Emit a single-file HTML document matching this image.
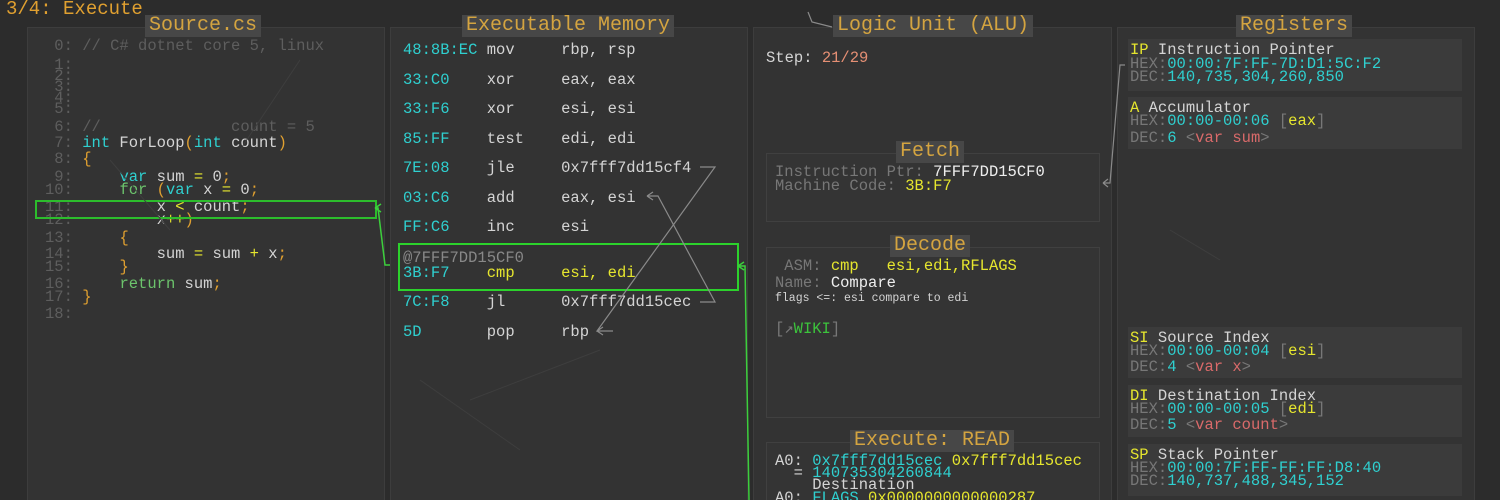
<!DOCTYPE html><html style="overflow:hidden;height:500px"><head><style>
body{margin:0;width:1500px;height:500px;background:#2c2c2c;overflow:hidden;position:relative;font-family:"Liberation Mono","DejaVu Sans Mono",monospace;font-size:15.5px;color:#d4d4d4}
.a{position:absolute;white-space:pre;line-height:1}
.p{position:absolute;background:#333;border:1px solid #3d3d3d}
.b{position:absolute;border:1px solid #404040;background:#343434}
.tt{position:absolute;background:#474747;color:#d4a440;font-size:20px;line-height:22px;padding:0 4px;white-space:pre}
.r{position:absolute;background:#3b3b3b;left:1128px;width:334px}
.c{color:#2fd0d0}.y{color:#e6e62e}.o{color:#e0a030}.d{color:#777}.g{color:#888}.k{color:#5e5e5e}.m{color:#d96a6a}.w{color:#eee}.gr{color:#6cc46c}
</style></head><body>
<div class="a o" style="left:6px;top:0px;font-size:19px">3/4: Execute</div>
<div class="p" style="left:27px;top:27px;width:356px;height:473px"></div>
<div class="p" style="left:390px;top:27px;width:356px;height:473px"></div>
<div class="p" style="left:753px;top:27px;width:357px;height:473px"></div>
<div class="p" style="left:1117px;top:27px;width:356px;height:473px"></div>
<div class="tt" style="left:145px;top:15px">Source.cs</div>
<div class="tt" style="left:462px;top:15px">Executable Memory</div>
<div class="tt" style="left:833px;top:15px">Logic Unit (ALU)</div>
<div class="tt" style="left:1236px;top:15px">Registers</div>

<!-- source -->
<div class="a k" style="left:45px;top:39px"> 0: // C# dotnet core 5, linux</div>
<div class="a k" style="left:45px;top:58px"> 1:</div>
<div class="a k" style="left:45px;top:69px"> 2:</div>
<div class="a k" style="left:45px;top:80px"> 3:</div>
<div class="a k" style="left:45px;top:91px"> 4:</div>
<div class="a k" style="left:45px;top:102px"> 5:</div>
<div class="a k" style="left:45px;top:120px"> 6: //              count = 5</div>
<div class="a" style="left:45px;top:136px"><span class="k"> 7: </span><span class="c">int</span> ForLoop<span class="o">(</span><span class="c">int</span> count<span class="o">)</span></div>
<div class="a" style="left:45px;top:152px"><span class="k"> 8: </span><span class="o">{</span></div>
<div class="a" style="left:45px;top:170px"><span class="k"> 9: </span>    <span class="c">var</span> sum <span class="y">=</span> 0<span class="o">;</span></div>
<div class="a" style="left:45px;top:183px"><span class="k">10: </span>    <span class="gr">for</span> <span class="o">(</span><span class="c">var</span> x <span class="y">=</span> 0<span class="o">;</span></div>
<div class="a" style="left:45px;top:200px"><span class="k">11: </span>        x <span class="y">&lt;</span> count<span class="o">;</span></div>
<div class="a" style="left:45px;top:213px"><span class="k">12: </span>        x<span class="y">++</span><span class="o">)</span></div>
<div class="a" style="left:45px;top:231px"><span class="k">13: </span>    <span class="o">{</span></div>
<div class="a" style="left:45px;top:247px"><span class="k">14: </span>        sum <span class="y">=</span> sum <span class="y">+</span> x<span class="o">;</span></div>
<div class="a" style="left:45px;top:260px"><span class="k">15: </span>    <span class="o">}</span></div>
<div class="a" style="left:45px;top:277px"><span class="k">16: </span>    <span class="gr">return</span> sum<span class="o">;</span></div>
<div class="a" style="left:45px;top:290px"><span class="k">17: </span><span class="o">}</span></div>
<div class="a k" style="left:45px;top:307px">18:</div>
<div style="position:absolute;left:35px;top:200px;width:338px;height:15px;border:2px solid #2cbd2c"></div>

<!-- memory -->
<div class="a" style="left:403px;top:43px"><span class="c">48:8B:EC</span> mov     rbp, rsp</div>
<div class="a" style="left:403px;top:73px"><span class="c">33:C0</span>    xor     eax, eax</div>
<div class="a" style="left:403px;top:102px"><span class="c">33:F6</span>    xor     esi, esi</div>
<div class="a" style="left:403px;top:132px"><span class="c">85:FF</span>    test    edi, edi</div>
<div class="a" style="left:403px;top:161px"><span class="c">7E:08</span>    jle     0x7fff7dd15cf4</div>
<div class="a" style="left:403px;top:191px"><span class="c">03:C6</span>    add     eax, esi</div>
<div class="a" style="left:403px;top:220px"><span class="c">FF:C6</span>    inc     esi</div>
<div class="a g" style="left:403px;top:251px">@7FFF7DD15CF0</div>
<div class="a y" style="left:403px;top:266px"><span class="c">3B:F7</span>    cmp     esi, edi</div>
<div class="a" style="left:403px;top:295px"><span class="c">7C:F8</span>    jl      0x7fff7dd15cec</div>
<div class="a" style="left:403px;top:325px"><span class="c">5D</span>       pop     rbp</div>
<div style="position:absolute;left:398px;top:243px;width:337px;height:44px;border:2px solid #2cd22c"></div>

<svg style="position:absolute;left:0;top:0" width="1500" height="500" fill="none">
<g stroke="#8a8a8a" stroke-width="1.2">
<path d="M700 167H715L597 331H613M597 331l6-4M597 331l6 4"/>
<path d="M700 302H715L658 196H647M647 196l6-4M647 196l6 4"/>
<path d="M1125 65H1120L1110 183H1103M1103 183l5-4M1103 183l5 4"/>
<path d="M808 12L812 22L832 27"/>
</g>
<g stroke="#3ccf3c" stroke-width="1.5">
<path d="M390 265H385L378 208H375M375 208l6-4M375 208l6 4"/>
<path d="M749 500L745 266H738M738 266l6-4M738 266l6 4"/>
</g>
<g stroke="#3e3e3e" stroke-width="1"><path d="M240 150L300 60M420 380L520 450M470 400L600 350M170 230L110 160M1170 230L1220 260"/></g>
</svg>

<!-- ALU -->
<div class="a" style="left:766px;top:51px">Step: <span style="color:#e58f74">21/29</span></div>
<div class="b" style="left:766px;top:153px;width:332px;height:67px"></div>
<div class="tt" style="left:896px;top:141px">Fetch</div>
<div class="a" style="left:775px;top:165px"><span class="d">Instruction Ptr: </span><span class="w">7FFF7DD15CF0</span></div>
<div class="a" style="left:775px;top:179px"><span class="d">Machine Code: </span><span class="y">3B:F7</span></div>
<div class="b" style="left:766px;top:247px;width:332px;height:169px"></div>
<div class="tt" style="left:890px;top:235px">Decode</div>
<div class="a" style="left:775px;top:259px"><span class="d"> ASM: </span><span class="y">cmp   esi,edi,RFLAGS</span></div>
<div class="a" style="left:775px;top:276px"><span class="d">Name: </span><span class="w">Compare</span></div>
<div class="a" style="left:775px;top:293px;font-size:11.5px">flags &lt;=: esi compare to edi</div>
<div class="a d" style="left:775px;top:322px">[↗<span style="color:#3cc43c">WIKI</span>]</div>
<div class="b" style="left:766px;top:442px;width:332px;height:70px"></div>
<div class="tt" style="left:850px;top:430px">Execute: READ</div>
<div class="a" style="left:775px;top:454px">A0: <span class="c">0x7fff7dd15cec</span> <span class="y">0x7fff7dd15cec</span></div>
<div class="a" style="left:775px;top:466px">  = <span class="c">140735304260844</span></div>
<div class="a" style="left:775px;top:478px">    Destination</div>
<div class="a" style="left:775px;top:491px">A0: <span class="c">FLAGS</span> <span class="y">0x0000000000000287</span></div>

<!-- registers -->
<div class="r" style="top:39px;height:52px"></div>
<div class="a" style="left:1130px;top:43px"><span class="y">IP</span> Instruction Pointer</div>
<div class="a" style="left:1130px;top:57px"><span class="d">HEX:</span><span class="c">00:00:7F:FF-7D:D1:5C:F2</span></div>
<div class="a" style="left:1130px;top:70px"><span class="d">DEC:</span><span class="c">140,735,304,260,850</span></div>
<div class="r" style="top:97px;height:52px"></div>
<div class="a" style="left:1130px;top:101px"><span class="y">A</span> Accumulator</div>
<div class="a" style="left:1130px;top:114px"><span class="d">HEX:</span><span class="c">00:00-00:06</span> <span class="d">[</span><span class="y">eax</span><span class="d">]</span></div>
<div class="a" style="left:1130px;top:131px"><span class="d">DEC:</span><span class="c">6</span> <span class="d">&lt;</span><span class="m">var sum</span><span class="d">&gt;</span></div>
<div class="r" style="top:327px;height:51px"></div>
<div class="a" style="left:1130px;top:331px"><span class="y">SI</span> Source Index</div>
<div class="a" style="left:1130px;top:344px"><span class="d">HEX:</span><span class="c">00:00-00:04</span> <span class="d">[</span><span class="y">esi</span><span class="d">]</span></div>
<div class="a" style="left:1130px;top:360px"><span class="d">DEC:</span><span class="c">4</span> <span class="d">&lt;</span><span class="m">var x</span><span class="d">&gt;</span></div>
<div class="r" style="top:385px;height:52px"></div>
<div class="a" style="left:1130px;top:389px"><span class="y">DI</span> Destination Index</div>
<div class="a" style="left:1130px;top:402px"><span class="d">HEX:</span><span class="c">00:00-00:05</span> <span class="d">[</span><span class="y">edi</span><span class="d">]</span></div>
<div class="a" style="left:1130px;top:418px"><span class="d">DEC:</span><span class="c">5</span> <span class="d">&lt;</span><span class="m">var count</span><span class="d">&gt;</span></div>
<div class="r" style="top:444px;height:52px"></div>
<div class="a" style="left:1130px;top:448px"><span class="y">SP</span> Stack Pointer</div>
<div class="a" style="left:1130px;top:461px"><span class="d">HEX:</span><span class="c">00:00:7F:FF-FF:FF:D8:40</span></div>
<div class="a" style="left:1130px;top:474px"><span class="d">DEC:</span><span class="c">140,737,488,345,152</span></div>
</body></html>
